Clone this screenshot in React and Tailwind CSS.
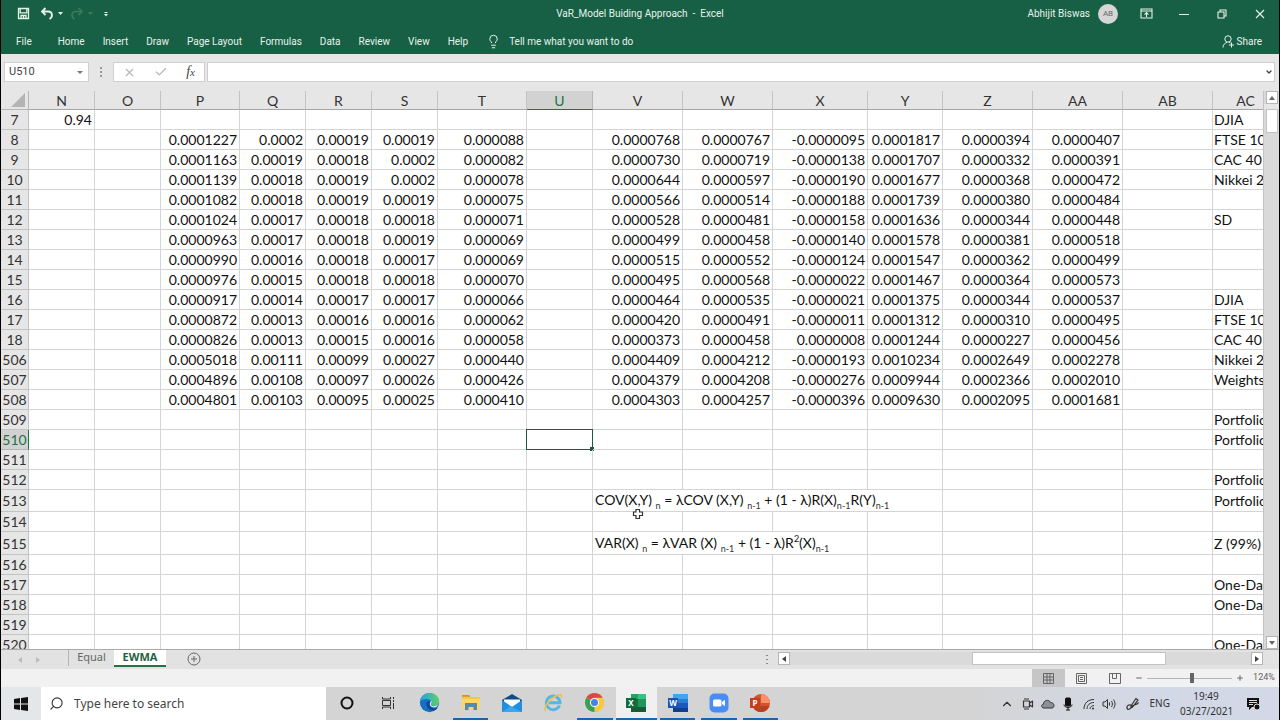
import {
    ChevronDown,
    ChevronUp,
    Lightbulb,
    Minus,
    Plus,
    Search,
    X,
    Check,
} from "lucide-react"

const COLUMNS = [
    { name: "N", width: 66 },
    { name: "O", width: 66 },
    { name: "P", width: 79 },
    { name: "Q", width: 66 },
    { name: "R", width: 66 },
    { name: "S", width: 66 },
    { name: "T", width: 89 },
    { name: "U", width: 66 },
    { name: "V", width: 90 },
    { name: "W", width: 90 },
    { name: "X", width: 95 },
    { name: "Y", width: 75 },
    { name: "Z", width: 90 },
    { name: "AA", width: 90 },
    { name: "AB", width: 90 },
    { name: "AC", width: 66 },
]

const VALUE_COLUMNS = ["P", "Q", "R", "S", "T", "V", "W", "X", "Y", "Z", "AA"]

const VALUES = {
    8: "0.0001227 0.0002 0.00019 0.00019 0.000088 0.0000768 0.0000767 -0.0000095 0.0001817 0.0000394 0.0000407",
    9: "0.0001163 0.00019 0.00018 0.0002 0.000082 0.0000730 0.0000719 -0.0000138 0.0001707 0.0000332 0.0000391",
    10: "0.0001139 0.00018 0.00019 0.0002 0.000078 0.0000644 0.0000597 -0.0000190 0.0001677 0.0000368 0.0000472",
    11: "0.0001082 0.00018 0.00019 0.00019 0.000075 0.0000566 0.0000514 -0.0000188 0.0001739 0.0000380 0.0000484",
    12: "0.0001024 0.00017 0.00018 0.00018 0.000071 0.0000528 0.0000481 -0.0000158 0.0001636 0.0000344 0.0000448",
    13: "0.0000963 0.00017 0.00018 0.00019 0.000069 0.0000499 0.0000458 -0.0000140 0.0001578 0.0000381 0.0000518",
    14: "0.0000990 0.00016 0.00018 0.00017 0.000069 0.0000515 0.0000552 -0.0000124 0.0001547 0.0000362 0.0000499",
    15: "0.0000976 0.00015 0.00018 0.00018 0.000070 0.0000495 0.0000568 -0.0000022 0.0001467 0.0000364 0.0000573",
    16: "0.0000917 0.00014 0.00017 0.00017 0.000066 0.0000464 0.0000535 -0.0000021 0.0001375 0.0000344 0.0000537",
    17: "0.0000872 0.00013 0.00016 0.00016 0.000062 0.0000420 0.0000491 -0.0000011 0.0001312 0.0000310 0.0000495",
    18: "0.0000826 0.00013 0.00015 0.00016 0.000058 0.0000373 0.0000458 0.0000008 0.0001244 0.0000227 0.0000456",
    506: "0.0005018 0.00111 0.00099 0.00027 0.000440 0.0004409 0.0004212 -0.0000193 0.0010234 0.0002649 0.0002278",
    507: "0.0004896 0.00108 0.00097 0.00026 0.000426 0.0004379 0.0004208 -0.0000276 0.0009944 0.0002366 0.0002010",
    508: "0.0004801 0.00103 0.00095 0.00025 0.000410 0.0004303 0.0004257 -0.0000396 0.0009630 0.0002095 0.0001681",
}

const LABELS = {
    7: "DJIA",
    8: "FTSE 100",
    9: "CAC 40",
    10: "Nikkei 225",
    12: "SD",
    16: "DJIA",
    17: "FTSE 100",
    18: "CAC 40",
    506: "Nikkei 225",
    507: "Weights",
    509: "Portfolio",
    510: "Portfolio",
    512: "Portfolio",
    513: "Portfolio",
    515: "Z (99%)",
    517: "One-Day",
    518: "One-Day",
    520: "One-Day",
}

const ROWS = [
    7, 8, 9, 10, 11, 12, 13, 14, 15, 16, 17, 18, 506, 507, 508, 509, 510, 511,
    512, 513, 514, 515, 516, 517, 518, 519, 520,
]

const ROW_HEIGHTS = { 513: "h-[22px]", 515: "h-[23px]" }

const RIBBON_TABS = ["Home", "Insert", "Draw", "Page Layout", "Formulas", "Data", "Review", "View", "Help"]

function Sub({ children }) {
    return <span className="relative top-1 text-[9px] text-[#333]">{children}</span>
}

function Sup({ children }) {
    return <span className="relative -top-1.5 text-[9px]">{children}</span>
}

// long text that spills over the empty cells on its right
const FORMULAS = {
    513: {
        span: 4,
        text: (
            <>
                COV(X,Y) <Sub>n</Sub> = λCOV (X,Y) <Sub>n-1</Sub> + (1 - λ)R(X)<Sub>n-1</Sub>R(Y)<Sub>n-1</Sub>
            </>
        ),
    },
    515: {
        span: 3,
        text: (
            <>
                VAR(X) <Sub>n</Sub> = λVAR (X) <Sub>n-1</Sub> + (1 - λ)R<Sup>2</Sup>(X)<Sub>n-1</Sub>
            </>
        ),
    },
}

function cellValue(row, column) {
    if (row === 7 && column === "N") return "0.94"
    const index = VALUE_COLUMNS.indexOf(column)
    if (index < 0 || !VALUES[row]) return ""
    return VALUES[row].split(" ")[index]
}

function CellCursor() {
    return (
        <svg className="absolute -top-1 left-[39px] z-10" width="12" height="12" viewBox="0 0 12 12">
            <path
                d="M4 1.5h3.5V4H10.500v3.5H7.500v3H4v-3H1.500V4H4z"
                fill="#fff"
                stroke="#333"
                strokeWidth="1.2"
            />
        </svg>
    )
}

function SheetRow({ row }) {
    const cells = []
    for (let i = 0; i < COLUMNS.length; i++) {
        const column = COLUMNS[i].name
        if (column === "V" && FORMULAS[row]) {
            cells.push(
                <td key={column} colSpan={FORMULAS[row].span} className="border-r border-b border-[#d4d4d4] pt-px pl-[2px]">
                    {FORMULAS[row].text}
                </td>
            )
            i += FORMULAS[row].span - 1
        } else if (column === "AC") {
            cells.push(
                <td key={column} className="overflow-hidden border-r border-b border-[#d4d4d4] pt-px pl-px">
                    {LABELS[row]}
                </td>
            )
        } else {
            cells.push(
                <td key={column} className="relative border-r border-b border-[#d4d4d4] pt-px pr-[2px] text-right">
                    {cellValue(row, column)}
                    {row === 510 && column === "U" && (
                        <span className="absolute -top-px -right-px -bottom-px -left-px border border-[#1e5a42]">
                            <span className="absolute -right-[2px] -bottom-[2px] size-1 bg-[#1e5a42]" />
                        </span>
                    )}
                    {row === 514 && column === "V" && <CellCursor />}
                </td>
            )
        }
    }
    return (
        <tr className={ROW_HEIGHTS[row] || "h-5"}>
            <th
                scope="row"
                className={
                    row === 510
                        ? "border-r border-b border-[#b5b5b5] border-r-[#217346] bg-[#d2d2d2] px-0 pt-px pb-0 text-center font-normal text-[#217346]"
                        : "border-r border-b border-[#c3c3c3] bg-[#e6e6e6] px-0 pt-px pb-0 text-center font-normal text-[#333]"
                }
            >
                {row}
            </th>
            {cells}
        </tr>
    )
}

function Sheet() {
    return (
        <div className="min-w-0 flex-1 overflow-hidden bg-white">
            <table className="w-[1278px] table-fixed border-separate border-spacing-0 font-['Lato','Noto_Sans',sans-serif] text-[14px] leading-4 whitespace-nowrap text-[#111]">
                <colgroup>
                    <col style={{ width: 28 }} />
                    {COLUMNS.map((column) => (
                        <col key={column.name} style={{ width: column.width }} />
                    ))}
                </colgroup>
                <thead>
                    <tr className="h-[19px]">
                        <th aria-label="Select all" className="border-r border-b border-[#b5b5b5] bg-[#e6e6e6] p-0">
                            <svg className="mr-[3px] ml-auto" width="14" height="14" viewBox="0 0 14 14">
                                <path d="M14 0v14H0z" fill="#b4b4b4" />
                            </svg>
                        </th>
                        {COLUMNS.map((column) => (
                            <th
                                key={column.name}
                                scope="col"
                                className={
                                    column.name === "U"
                                        ? "border-r border-b border-[#b5b5b5] border-b-[#217346] bg-[#d2d2d2] px-0 pt-[2px] pb-0 text-center font-normal text-[#217346]"
                                        : "border-r border-b border-[#c3c3c3] border-b-[#a5a5a5] bg-[#e6e6e6] px-0 pt-[2px] pb-0 text-center font-normal text-[#333]"
                                }
                            >
                                {column.name}
                            </th>
                        ))}
                    </tr>
                </thead>
                <tbody>
                    {ROWS.map((row) => (
                        <SheetRow key={row} row={row} />
                    ))}
                </tbody>
            </table>
        </div>
    )
}

function Arrow({ points }) {
    return (
        <svg width="8" height="8" viewBox="0 0 8 8" fill="currentColor">
            <polygon points={points} />
        </svg>
    )
}

function VerticalScrollbar() {
    return (
        <div className="flex w-4 flex-col items-center border-l border-[#c3c3c3] bg-[#d9d9d9]">
            <button aria-label="Scroll up" className="flex h-[13px] w-3 items-center justify-center border border-[#b5b5b5] bg-white text-[#666]">
                <Arrow points="1,6 4,2 7,6" />
            </button>
            <div className="h-[5px] w-full bg-[#e6e6e6]" />
            <div className="h-6 w-3 border border-[#c3c3c3] bg-white" />
            <div className="flex-1" />
            <button aria-label="Scroll down" className="flex h-[13px] w-3 items-center justify-center border border-[#b5b5b5] bg-white text-[#666]">
                <Arrow points="1,2 7,2 4,6" />
            </button>
        </div>
    )
}

function TitleBar() {
    return (
        <div className="grid h-[27px] grid-cols-[1fr_auto_1fr] items-center">
            <div className="flex items-center pl-4">
                <button aria-label="Save">
                    <svg width="13" height="13" viewBox="0 0 13 13" fill="none" stroke="currentColor" strokeWidth="1.3">
                        <path d="M1.500 1.500h10v10h-10zM3.200 1.500v4.300h6.600V1.500M4 11.500V8.500h5v3M6.500 9v2" />
                    </svg>
                </button>
                <button aria-label="Undo" className="ml-2.5 flex items-center gap-[2px]">
                    <svg width="14" height="13" viewBox="0 0 14 13" fill="none" stroke="currentColor" strokeWidth="1.8">
                        <path d="M5.500 1L2 4.500L5.500 8M2 4.500h6c5 0 5 5.500 1.500 7.500" />
                    </svg>
                    <Arrow points="2,2 7,2 4.500,5" />
                </button>
                <button aria-label="Redo" className="ml-1.5 flex items-center gap-[2px] text-[#3d7a60]">
                    <svg width="14" height="13" viewBox="0 0 14 13" fill="none" stroke="currentColor" strokeWidth="1.6">
                        <path d="M8.500 1L12 4.500L8.500 8M12 4.500H6c-5 0-5 5.500-1.500 7.500" />
                    </svg>
                    <Arrow points="2,2 7,2 4.500,5" />
                </button>
                <button aria-label="Customize Quick Access Toolbar" className="ml-2">
                    <svg width="8" height="8" viewBox="0 0 8 8" fill="currentColor">
                        <path d="M2.500 2h3v1h-3zM2 4h4L4 6.500z" />
                    </svg>
                </button>
            </div>
            <h1 className="whitespace-pre">VaR_Model Buiding Approach  -  Excel</h1>
            <div className="flex items-center justify-end">
                <span>Abhijit Biswas</span>
                <span className="ml-2 flex size-5 items-center justify-center rounded-full bg-[#d6d6d6] text-[8px] text-[#666]">AB</span>
                <button aria-label="Ribbon Display Options" className="ml-[22px]">
                    <svg width="13" height="11" viewBox="0 0 13 11" fill="none" stroke="currentColor" strokeWidth="1.100">
                        <path d="M1 1h11v9H1zM1 3h11M6.500 9V4.800M4.500 6.600l2-2 2 2" />
                    </svg>
                </button>
                <button aria-label="Minimize" className="ml-[26px]">
                    <svg width="10" height="10" viewBox="0 0 10 10" stroke="currentColor"><path d="M0 5.500h10" /></svg>
                </button>
                <button aria-label="Restore" className="ml-7">
                    <svg width="10" height="10" viewBox="0 0 10 10" fill="none" stroke="currentColor" strokeWidth="1.100">
                        <path d="M1 3h6v6H1zM3 3V1h6v6H7" />
                    </svg>
                </button>
                <button aria-label="Close" className="mr-[14px] ml-7">
                    <svg width="10" height="10" viewBox="0 0 10 10" stroke="currentColor" strokeWidth="1.100"><path d="M1 1l8 8M9 1l-8 8" /></svg>
                </button>
            </div>
        </div>
    )
}

function Ribbon() {
    return (
        <nav className="flex h-[27px] items-center gap-[18px] pt-[2px] pl-[15px]">
            <button className="mr-2">File</button>
            {RIBBON_TABS.map((tab) => (
                <button key={tab}>{tab}</button>
            ))}
            <button className="flex items-center gap-2">
                <Lightbulb size={15} strokeWidth={1.6} />
                Tell me what you want to do
            </button>
            <button className="mr-[17px] ml-auto flex items-center gap-[2px]">
                <svg width="13" height="13" viewBox="0 0 13 13" fill="none" stroke="currentColor">
                    <circle cx="6" cy="4" r="3.200" />
                    <path d="M1 12.500C1 9.500 3 8 5 7.500M7 7.200l1.500.8M9.500 7.500v5M7 10h5" />
                </svg>
                Share
            </button>
        </nav>
    )
}

function FormulaBar() {
    return (
        <div className="flex h-[37px] items-start bg-[#e6e6e6] pt-2 pr-1 pl-[3px] text-[#444]">
            <div className="flex h-5 w-[85px] items-center border border-[#cfcfcf] bg-white">
                <input aria-label="Name Box" defaultValue="U510" className="w-full min-w-0 pl-1 text-[11px] outline-none" />
                <button aria-label="Open name list" className="mr-1 text-[#777]">
                    <Arrow points="1,3 7,3 4,6" />
                </button>
            </div>
            <div className="flex h-5 w-6 items-center justify-center">
                <svg width="2" height="12" viewBox="0 0 2 12" fill="#999">
                    <path d="M0 1h2v2H0zM0 5h2v2H0zM0 9h2v2H0z" />
                </svg>
            </div>
            <div className="flex h-5 w-[92px] items-center justify-around border border-[#cfcfcf] bg-white">
                <button aria-label="Cancel" className="text-[#b5b5b5]">
                    <X size={13} strokeWidth={2} />
                </button>
                <button aria-label="Enter" className="text-[#b5b5b5]">
                    <Check size={14} strokeWidth={2} />
                </button>
                <button aria-label="Insert Function" className="font-['Liberation_Serif',serif] text-[14px] leading-4 italic">
                    f<span className="text-[11px]">x</span>
                </button>
            </div>
            <div className="ml-[2px] flex h-5 flex-1 items-center border border-[#cfcfcf] bg-white">
                <input aria-label="Formula Bar" className="h-full min-w-0 flex-1 px-1 text-[11px] outline-none" />
                <button aria-label="Expand Formula Bar" className="mr-px">
                    <ChevronDown size={8} strokeWidth={4} />
                </button>
            </div>
        </div>
    )
}

function SheetTabs() {
    return (
        <div className="flex h-5 items-start border-t border-[#a9a9a9] bg-[#e2e2e2] text-[#666]">
            <button aria-label="Previous sheet" className="mt-1.5 ml-[15px] text-[#bbb]"><Arrow points="6,1 6,7 2,4" /></button>
            <button aria-label="Next sheet" className="mt-1.5 ml-[10px] text-[#bbb]"><Arrow points="2,1 2,7 6,4" /></button>
            <button className="ml-[26px] flex h-4 w-[46px] justify-center border-l border-[#b5b5b5] font-['Noto_Sans',sans-serif] text-[11px] leading-[14px]">Equal</button>
            <button className="flex h-[17px] w-[52px] justify-center border-b-2 border-[#217346] bg-white font-['Noto_Sans',sans-serif] text-[11px] leading-[14px] font-bold text-[#1e6343]">EWMA</button>
            <button aria-label="New sheet" className="mt-[2px] ml-[21px]">
                <svg width="14" height="14" viewBox="0 0 14 14" fill="none" stroke="currentColor">
                    <circle cx="7" cy="7" r="6" />
                    <path d="M7 4v6M4 7h6" />
                </svg>
            </button>
            <svg className="mt-1 ml-auto" width="2" height="12" viewBox="0 0 2 12" fill="#888">
                <path d="M0 1h2v1H0zM0 5h2v1H0zM0 9h2v1H0z" />
            </svg>
            <div className="mt-[2px] mr-4 ml-[10px] flex h-[13px] w-[485px] bg-[#dadada]">
                <button aria-label="Scroll left" className="flex w-3 items-center justify-center border border-[#b5b5b5] bg-white text-[#444]">
                    <Arrow points="6,1 6,7 2,4" />
                </button>
                <div className="ml-[182px] w-[194px] border border-[#c3c3c3] bg-white" />
                <button aria-label="Scroll right" className="ml-auto flex w-3 items-center justify-center border border-[#b5b5b5] bg-white text-[#444]">
                    <Arrow points="2,1 2,7 6,4" />
                </button>
            </div>
        </div>
    )
}

function StatusBar() {
    return (
        <div className="flex h-[18px] items-center justify-end bg-[#f1f1f1] text-[#666]">
            <button aria-label="Normal view" className="flex h-full w-[33px] items-center justify-center bg-[#c6c6c6]">
                <svg width="11" height="11" viewBox="0 0 11 11" fill="none" stroke="currentColor">
                    <path d="M.5.5h10v10H.5zM.5 4h10M.5 7h10M4 .5v10M7 .5v10" />
                </svg>
            </button>
            <button aria-label="Page layout view" className="flex w-[33px] justify-center">
                <svg width="11" height="11" viewBox="0 0 11 11" fill="none" stroke="currentColor">
                    <path d="M.5.5h10v10H.5zM2.500 2.500h6v6h-6zM4 4.500h3M4 6.500h3" />
                </svg>
            </button>
            <button aria-label="Page break preview" className="flex w-[33px] justify-center">
                <svg width="12" height="11" viewBox="0 0 12 11" fill="none" stroke="currentColor">
                    <path d="M.5.5h11v10H.5zM3.500.5v5h4v-5" />
                </svg>
            </button>
            <button aria-label="Zoom out" className="ml-1"><Minus size={8} strokeWidth={3} /></button>
            <input
                type="range"
                aria-label="Zoom"
                min="0"
                max="100"
                defaultValue="53"
                className="mx-1 h-[10px] w-[85px] appearance-none bg-[linear-gradient(#b5b5b5,#b5b5b5)] bg-[length:100%_1px] bg-center bg-no-repeat [&::-webkit-slider-thumb]:h-[10px] [&::-webkit-slider-thumb]:w-1 [&::-webkit-slider-thumb]:appearance-none [&::-webkit-slider-thumb]:bg-[#666]"
            />
            <button aria-label="Zoom in"><Plus size={8} strokeWidth={3} /></button>
            <button className="mr-1 ml-[9px] w-[22px] text-[9px]">124%</button>
        </div>
    )
}

function EdgeIcon() {
    return (
        <svg width="21" height="21" viewBox="0 0 24 24">
            <defs>
                <linearGradient id="edgeTop" x1="0" x2="1">
                    <stop offset="0" stopColor="#2a9fe0" />
                    <stop offset="1" stopColor="#5fd068" />
                </linearGradient>
            </defs>
            <circle cx="12" cy="12" r="11" fill="#1670c4" />
            <path d="M1 11C2 4.500 6.500 1 12 1c6.500 0 11 4.500 11 9.500 0 3.500-3 5.500-6 5.500-2.500 0-3.500-1-3-2 1-1.500.5-4.500-2.500-5.500C7.500 7 3 8.500 1 11z" fill="url(#edgeTop)" />
            <path d="M8.500 12c-1 5 3 9.500 8 9.300 2-.3 4-1.800 5-3.300-5 2-9.500-.5-8-4.500.8-1.500-1-3-2.500-3-1.500.1-2.300.6-2.500 1.500z" fill="#0f4a96" />
            <path d="M14 10c1.500 2-1 3.500 0 5 1.500 2 6 1.500 8-1-.8 3-3.500 4-6 3.500-3.500-.5-5-4-2-7.500z" fill="#dff1f7" />
        </svg>
    )
}

function ExplorerIcon() {
    return (
        <svg width="20" height="20" viewBox="0 0 20 20">
            <path d="M1 2h7l2 2h9v12H1z" fill="#f6c64a" />
            <path d="M1 2h7l1.500 1.800H1z" fill="#d8921f" />
            <path d="M1 6h18v10H1z" fill="#fcd767" />
            <path d="M4 10h12v7h-3.500v-3h-5v3H4z" fill="#5587b8" />
        </svg>
    )
}

function MailIcon() {
    return (
        <svg width="20" height="20" viewBox="0 0 20 20">
            <path d="M0 7l10-6 10 6v3H0z" fill="#124a8c" />
            <path d="M2 6.500h16v7H2z" fill="#fff" />
            <path d="M0 7l10 7 10-7v12H0z" fill="#1f8fe0" />
            <path d="M0 19l8.500-6L10 14l10 5z" fill="#38a7ee" />
        </svg>
    )
}

function InternetExplorerIcon() {
    return (
        <svg width="20" height="20" viewBox="0 0 20 20" fill="none">
            <path d="M16.500 12.500A6.800 6.800 0 1 1 17 9.800H5.500" stroke="#58b5e4" strokeWidth="3" />
            <path d="M3 18c-3-1 0-8 6-12.500S19.500.5 18.500 5" stroke="#efc24c" strokeWidth="1.600" />
        </svg>
    )
}

function ChromeIcon() {
    return (
        <svg width="19" height="19" viewBox="0 0 20 20">
            <path d="M10 10L1.340 5A10 10 0 0 1 18.660 5z" fill="#dc4a3d" />
            <path d="M10 10L18.660 5A10 10 0 0 1 10 20z" fill="#f7c93c" />
            <path d="M10 10v10A10 10 0 0 1 1.340 5z" fill="#3a9f55" />
            <path d="M10 5h8.660A10 10 0 0 1 10 20l4.500-8z" fill="#f7c93c" />
            <circle cx="10" cy="10" r="4.800" fill="#fff" />
            <circle cx="10" cy="10" r="3.700" fill="#4682e8" />
        </svg>
    )
}

function ExcelIcon() {
    return (
        <svg width="20" height="20" viewBox="0 0 20 20">
            <path d="M5 1h7v9H5z" fill="#23a366" />
            <path d="M12 1h8v5h-8z" fill="#34c481" />
            <path d="M5 6h7v8H5z" fill="#15703f" />
            <path d="M12 6h8v8h-8z" fill="#21965a" />
            <path d="M5 14h15v5H5z" fill="#175c37" />
            <path d="M0 5h10v10H0z" fill="#0f6b3a" />
            <text x="5" y="13" textAnchor="middle" fontSize="8" fontWeight="700" fill="#fff">X</text>
        </svg>
    )
}

function WordIcon() {
    return (
        <svg width="20" height="20" viewBox="0 0 20 20">
            <path d="M5 1h15v5H5z" fill="#41a5ee" />
            <path d="M5 6h15v4H5z" fill="#2b7cd3" />
            <path d="M5 10h15v5H5z" fill="#185abd" />
            <path d="M5 15h15v4H5z" fill="#103f91" />
            <path d="M0 5h10v10H0z" fill="#1a55b5" />
            <text x="5" y="13" textAnchor="middle" fontSize="8" fontWeight="700" fill="#fff">W</text>
        </svg>
    )
}

function ZoomIcon() {
    return (
        <svg width="20" height="20" viewBox="0 0 20 20">
            <rect x=".5" y=".5" width="19" height="19" rx="5" fill="#4a8cf6" />
            <rect x="4" y="6.500" width="8.500" height="7" rx="1.500" fill="#fff" />
            <path d="M13 9l3-2.300v6.600L13 11z" fill="#fff" />
        </svg>
    )
}

function PowerPointIcon() {
    return (
        <svg width="20" height="20" viewBox="0 0 20 20">
            <circle cx="11" cy="10" r="9" fill="#d35230" />
            <path d="M11 1a9 9 0 0 1 9 9h-9z" fill="#ff8f6b" />
            <path d="M2.500 13h17a9 9 0 0 1-17 0z" fill="#b9401f" />
            <path d="M0 5h10v10H0z" fill="#c43e1c" />
            <text x="5" y="13" textAnchor="middle" fontSize="8" fontWeight="700" fill="#fff">P</text>
        </svg>
    )
}

function CortanaIcon() {
    return (
        <svg width="14" height="14" viewBox="0 0 14 14" fill="none" stroke="#111" strokeWidth="2">
            <circle cx="7" cy="7" r="5.500" />
        </svg>
    )
}

function TaskViewIcon() {
    return (
        <svg width="14" height="14" viewBox="0 0 14 14" fill="none" stroke="#333">
            <path d="M1.500 1v2h8V1M1.500 13v-2h8v2M1.500 4.500h8v5h-8zM12.500 1v2M12.500 7v6M12.500 4v2" />
        </svg>
    )
}

const APPS = [
    { name: "Cortana", Icon: CortanaIcon },
    { name: "Task View", Icon: TaskViewIcon },
    { name: "Microsoft Edge", Icon: EdgeIcon },
    { name: "File Explorer", Icon: ExplorerIcon, open: true },
    { name: "Mail", Icon: MailIcon },
    { name: "Internet Explorer", Icon: InternetExplorerIcon },
    { name: "Google Chrome", Icon: ChromeIcon, open: true },
    { name: "Excel", Icon: ExcelIcon, open: true, active: true },
    { name: "Word", Icon: WordIcon, open: true },
    { name: "Zoom", Icon: ZoomIcon, open: true },
    { name: "PowerPoint", Icon: PowerPointIcon, open: true },
]

function Tray() {
    return (
        <div className="ml-auto flex items-center pr-[19px] text-[#333]">
            <button aria-label="Show hidden icons"><ChevronUp size={14} strokeWidth={2} /></button>
            <button aria-label="Meet Now" className="ml-2">
                <svg width="12" height="12" viewBox="0 0 12 12" fill="none" stroke="currentColor" strokeWidth="1.200">
                    <path d="M1.500 3h6v6h-6zM7.500 5l3-1.800v5.600l-3-1.800M2 1h5M2 11h5" />
                </svg>
            </button>
            <button aria-label="OneDrive" className="ml-[7px]">
                <svg width="14" height="10" viewBox="0 0 14 10" fill="#8d9097" stroke="currentColor" strokeWidth="1">
                    <path d="M3 9C0 9 0 5.500 2.500 5 2.500 1 8 0 9.500 3.500c3.500-.5 5 5 1.500 5.500z" />
                </svg>
            </button>
            <button aria-label="Microphone" className="ml-2">
                <svg width="10" height="14" viewBox="0 0 10 14" fill="none" stroke="#111">
                    <rect x="2.500" y="1" width="5" height="8" rx="1" fill="#111" />
                    <path d="M1 7.500c0 4 8 4 8 0M5 10v3M3 13h4" />
                </svg>
            </button>
            <button aria-label="Network" className="ml-[10px]">
                <svg width="12" height="12" viewBox="0 0 12 12" fill="none" stroke="currentColor">
                    <path d="M1 11C1 5 5 1.500 11 1.500M4 11c0-4 3-6.500 7-6.500M7 11c0-2 2-3.500 4-3.500" />
                    <circle cx="10" cy="10.500" r="1" fill="currentColor" stroke="none" />
                </svg>
            </button>
            <button aria-label="Volume" className="ml-[7px]">
                <svg width="14" height="12" viewBox="0 0 14 12" fill="none" stroke="currentColor">
                    <path d="M1 4h2l2.500-2.500v9L3 8H1zM7.500 4.500v3M9.500 3c1.200 2 1.200 4 0 6M11.500 1.500c2 3 2 6 0 9" />
                </svg>
            </button>
            <button aria-label="Windows Ink" className="ml-[10px]">
                <svg width="14" height="14" viewBox="0 0 14 14" fill="none" stroke="currentColor" strokeWidth="1.200">
                    <path d="M5 9l5-7.500 2 1.500-5.500 7L5 11zM5 8C1 7 0 11 2 12.500c3 0 3-3 5-4s5-1 5.500-3" />
                </svg>
            </button>
            <button className="ml-[10px] text-[10px]">ENG</button>
            <button className="ml-[10px] w-[52px] text-center text-[10px] leading-[15px]">
                <span className="block">19:49</span>
                <span className="block">03/27/2021</span>
            </button>
            <button aria-label="Notifications" className="ml-[14px]">
                <svg width="14" height="14" viewBox="0 0 14 14">
                    <path d="M1 1h12v9H6l-3 3v-3H1z" fill="#111" />
                    <path d="M3 3.500h8M3 5.500h8M3 7.500h4" stroke="#ddd" />
                    <circle cx="11" cy="10" r="3" fill="#111" stroke="#ddd" />
                </svg>
            </button>
        </div>
    )
}

function Taskbar() {
    return (
        <footer className="flex h-[33px] bg-linear-to-r from-[#d4d4d4] from-75% to-[#d2d8e6] to-90% font-['Noto_Sans',sans-serif]">
            <button aria-label="Start" className="flex w-10 items-center justify-center bg-[#e4e7ea]">
                <svg width="14" height="14" viewBox="0 0 14 14" fill="#111">
                    <path d="M0 2l6-.9v5.500H0zM7 1l7-1v6.600H7zM0 7.500h6V13l-6-.9zM7 7.500h7V14l-7-1z" />
                </svg>
            </button>
            <label className="flex w-[285px] items-center gap-2.5 bg-white pl-2 text-[#333]">
                <Search size={15} strokeWidth={1.8} className="-scale-x-100" />
                <input
                    type="search"
                    aria-label="Type here to search"
                    placeholder="Type here to search"
                    className="min-w-0 flex-1 text-[12px] outline-none placeholder:text-[#444]"
                />
            </label>
            <div className="grid w-[455px] grid-cols-11">
                {APPS.map(({ name, Icon, open, active }) => (
                    <button
                        key={name}
                        aria-label={name}
                        className={active ? "flex flex-col items-center bg-[#f0f0f0]" : "flex flex-col items-center px-[3px]"}
                    >
                        <span className="flex flex-1 items-center">
                            <Icon />
                        </span>
                        <span className={open ? "h-[2px] w-full bg-[#1a64b0]" : "h-[2px] w-full"} />
                    </button>
                ))}
            </div>
            <Tray />
        </footer>
    )
}

export default function App() {
    return (
        <div className="flex h-screen flex-col overflow-hidden border-x border-black bg-[#e6e6e6] font-['Roboto',sans-serif] text-[10px]">
            <header className="bg-[#186045] text-[#e4f3ea]">
                <TitleBar />
                <Ribbon />
            </header>
            <FormulaBar />
            <main className="flex min-h-0 flex-1">
                <Sheet />
                <VerticalScrollbar />
            </main>
            <SheetTabs />
            <StatusBar />
            <Taskbar />
        </div>
    )
}
